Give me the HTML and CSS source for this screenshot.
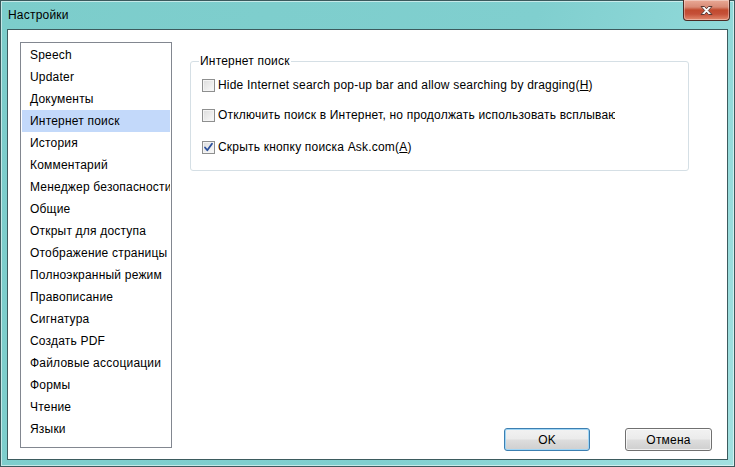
FILE: index.html
```html
<!DOCTYPE html>
<html lang="ru">
<head>
<meta charset="utf-8">
<title>Настройки</title>
<link rel="stylesheet" href="styles.css">
</head>
<body>
<div class="window">
  <div class="titlebar">
    <span class="title">Настройки</span>
    <span class="close">
      <svg width="17" height="11" viewBox="0 0 17 11">
        <path d="M3 1.5 L6.5 1.5 L8.5 3.8 L10.5 1.5 L14 1.5 L10.3 5.5 L14 9.5 L10.5 9.5 L8.5 7.2 L6.5 9.5 L3 9.5 L6.7 5.5 Z" fill="#ffffff" stroke="#5a3a34" stroke-width="1" stroke-linejoin="round"/>
      </svg>
    </span>
  </div>
  <div class="client">
    <div class="list">
      <div class="item">Speech</div>
      <div class="item">Updater</div>
      <div class="item">Документы</div>
      <div class="item selected">Интернет поиск</div>
      <div class="item">История</div>
      <div class="item">Комментарий</div>
      <div class="item">Менеджер безопасности</div>
      <div class="item">Общие</div>
      <div class="item">Открыт для доступа</div>
      <div class="item">Отображение страницы</div>
      <div class="item">Полноэкранный режим</div>
      <div class="item">Правописание</div>
      <div class="item">Сигнатура</div>
      <div class="item">Создать PDF</div>
      <div class="item">Файловые ассоциации</div>
      <div class="item">Формы</div>
      <div class="item">Чтение</div>
      <div class="item">Языки</div>
    </div>
    <div class="pane">
      <fieldset class="group">
        <legend class="legend">Интернет поиск</legend>
        <div class="row row1">
          <span class="cb"></span>
          <span class="label">Hide Internet search pop-up bar and allow searching by dragging(<u>H</u>)</span>
        </div>
        <div class="row row2">
          <span class="cb"></span>
          <span class="label">Отключить поиск в Интернет, но продолжать использовать всплывающую панель</span>
        </div>
        <div class="row row3">
          <span class="cb checked">
            <svg width="11" height="11" viewBox="0 0 11 11"><path d="M2 5.5 L4.3 8.3 L9 1.8" fill="none" stroke="#2a4f9c" stroke-width="1.8" stroke-linecap="round" stroke-linejoin="round"/></svg>
          </span>
          <span class="label">Скрыть кнопку поиска Ask.com(<u>A</u>)</span>
        </div>
      </fieldset>
      <div class="buttons">
        <button class="btn default">OK</button>
        <button class="btn">Отмена</button>
      </div>
    </div>
  </div>
</div>
</body>
</html>
```
FILE: styles.css
```css
* { box-sizing: border-box; }
html, body { margin: 0; padding: 0; }
body {
  width: 735px;
  height: 467px;
  overflow: hidden;
  font-family: "Liberation Sans", Arial, sans-serif;
  font-size: 12px;
  letter-spacing: 0.2px;
  color: #000;
  background: #fff;
}
.window {
  width: 735px;
  height: 467px;
  border: 1px solid #3b5a5d;
  background: linear-gradient(110deg, #7ccdcb 0%, #80cfcf 60%, #8fd8d8 80%, #a2e0e0 100%);
  box-shadow: inset 0 0 0 1px rgba(255,255,255,0.55);
  padding: 0 6px 6px 6px;
  display: flex;
  flex-direction: column;
}
.titlebar {
  height: 28px;
  display: flex;
  align-items: flex-start;
}
.title {
  margin-left: 1px;
  margin-top: 7px;
  line-height: 15px;
  font-size: 12px;
}
.close {
  margin-left: auto;
  margin-right: -2px;
  margin-top: -1px;
  width: 47px;
  height: 21px;
  border: 1px solid #4b2a24;
  border-top: none;
  border-radius: 0 0 4px 4px;
  background: linear-gradient(to bottom, #e9a996 0%, #d98b76 35%, #c14a2e 50%, #c55038 70%, #e28a6e 100%);
  box-shadow: inset 0 0 0 1px rgba(255,255,255,0.35);
  display: flex;
  align-items: center;
  justify-content: center;
}
.client {
  flex: 1;
  border: 1px solid #3d5b5e;
  background: #fff;
  padding: 12px 15px 8px 12px;
  display: flex;
}
.list {
  width: 152px;
  height: 406px;
  border: 1px solid #828790;
  padding: 1px;
  overflow: hidden;
}
.item {
  height: 22px;
  line-height: 22px;
  padding-left: 8px;
  white-space: nowrap;
  overflow: hidden;
}
.item.selected {
  background: #c3d9fa;
}
.pane {
  flex: 1;
  margin-left: 18px;
  display: flex;
  flex-direction: column;
}
.group {
  margin: 12px 0 0 0;
  width: 499px;
  border: 1px solid #d5dfe5;
  border-radius: 3px;
  padding: 0 0 15px 8px;
  min-width: 0;
}
.legend {
  padding: 0 1px;
  line-height: 15px;
}
.row {
  display: flex;
  align-items: center;
  height: 16px;
  padding-left: 3px;
}
.row1 { margin-top: 8px; }
.row2 { margin-top: 14px; }
.row3 { margin-top: 16px; }
.cb {
  width: 13px;
  height: 13px;
  flex: none;
  border: 1px solid #8e8f8f;
  background: linear-gradient(135deg, #dcdcdc 0%, #eeeeee 60%, #fafafa 100%);
  box-shadow: inset 0 0 0 1px #f4f4f4;
  display: flex;
  align-items: center;
  justify-content: center;
}
.label {
  margin-left: 3px;
  width: 397px;
  white-space: nowrap;
  overflow: hidden;
  line-height: 16px;
}
.buttons {
  margin-top: auto;
  display: flex;
  justify-content: flex-end;
  gap: 35px;
}
.btn {
  font-family: inherit;
  font-size: 12px;
  letter-spacing: 0.2px;
  width: 87px;
  height: 23px;
  padding: 0;
  color: #000;
  border: 1px solid #707070;
  border-radius: 3px;
  background: linear-gradient(to bottom, #f2f2f2 0%, #ebebeb 48%, #dddddd 52%, #cfcfcf 100%);
  box-shadow: inset 0 0 0 1px rgba(255,255,255,0.7);
}
.btn.default {
  width: 86px;
  border-color: #3c7fb1;
  box-shadow: inset 0 0 0 1px #9fd5f5;
}
```
